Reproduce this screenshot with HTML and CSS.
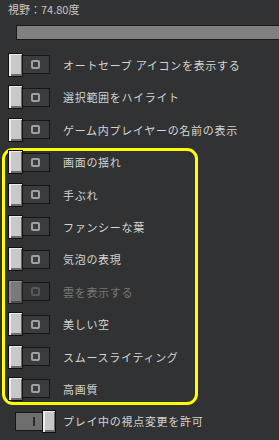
FILE: index.html
```html
<!DOCTYPE html>
<html lang="ja">
<head>
    <meta charset="UTF-8">
    <meta name="viewport" content="width=device-width, initial-scale=1.0">
    <title>ビデオ設定</title>
    <link rel="stylesheet" href="styles.css">
</head>
<body>
    <div class="title">視野：74.80度</div>
    <div class="slider"></div>

    <div class="list">
        <div class="row"><span class="toggle"><span class="knob"></span><span class="track"><i class="mark-o"></i></span></span><span class="label">オートセーブ アイコンを表示する</span></div>
        <div class="row"><span class="toggle"><span class="knob"></span><span class="track"><i class="mark-o"></i></span></span><span class="label">選択範囲をハイライト</span></div>
        <div class="row"><span class="toggle"><span class="knob"></span><span class="track"><i class="mark-o"></i></span></span><span class="label">ゲーム内プレイヤーの名前の表示</span></div>
        <div class="row"><span class="toggle"><span class="knob"></span><span class="track"><i class="mark-o"></i></span></span><span class="label">画面の揺れ</span></div>
        <div class="row"><span class="toggle"><span class="knob"></span><span class="track"><i class="mark-o"></i></span></span><span class="label">手ぶれ</span></div>
        <div class="row"><span class="toggle"><span class="knob"></span><span class="track"><i class="mark-o"></i></span></span><span class="label">ファンシーな葉</span></div>
        <div class="row"><span class="toggle"><span class="knob"></span><span class="track"><i class="mark-o"></i></span></span><span class="label">気泡の表現</span></div>
        <div class="row disabled"><span class="toggle"><span class="knob"></span><span class="track"><i class="mark-o"></i></span></span><span class="label">雲を表示する</span></div>
        <div class="row"><span class="toggle"><span class="knob"></span><span class="track"><i class="mark-o"></i></span></span><span class="label">美しい空</span></div>
        <div class="row"><span class="toggle"><span class="knob"></span><span class="track"><i class="mark-o"></i></span></span><span class="label">スムースライティング</span></div>
        <div class="row"><span class="toggle"><span class="knob"></span><span class="track"><i class="mark-o"></i></span></span><span class="label">高画質</span></div>
        <div class="row on"><span class="toggle"><span class="track"><i class="mark-i"></i></span><span class="knob"></span></span><span class="label">プレイ中の視点変更を許可</span></div>
    </div>

    <div class="highlight"></div>
</body>
</html>
```

FILE: styles.css
```css
* {
    margin: 0;
    padding: 0;
    box-sizing: border-box;
}

body {
    font-family: "Noto Sans CJK JP", "Noto Sans", sans-serif;
    background: #313233;
    color: #d4d4d4;
    width: 279px;
    height: 440px;
    overflow: hidden;
    padding-left: 8px;
    position: relative;
}

.title {
    height: 18px;
    line-height: 18px;
    font-size: 11px;
    color: #c8c8c8;
}

.slider {
    margin: 7px 0 0 8px;
    height: 15px;
    border: 1px solid #1a1a1b;
    border-right: none;
    background: #808080;
}

.list {
    margin-top: 8.8px;
}

.row {
    display: flex;
    align-items: center;
    height: 32.4px;
}

.toggle {
    display: flex;
    align-items: center;
    width: 42px;
    flex-shrink: 0;
}

.knob {
    width: 15px;
    height: 24px;
    border: 1px solid #111;
    background: #c8c8c8;
    box-shadow: inset 2px 1px 0 #ececec, inset -1px -2px 0 #6c6c6c;
    position: relative;
    z-index: 1;
}

.track {
    width: 28px;
    height: 19px;
    margin-left: -1px;
    border: 1px solid #161617;
    background: #3b3c3d;
    display: flex;
    align-items: center;
    padding-left: 8px;
}

.mark-o {
    width: 9px;
    height: 9px;
    border: 2px solid #a0a0a0;
    border-radius: 2px;
}

.label {
    margin-left: 13px;
    font-size: 11px;
    letter-spacing: 0.7px;
    white-space: nowrap;
}

.disabled .knob {
    background: #7a7a7a;
    box-shadow: inset 2px 1px 0 #8e8e8e, inset -1px -2px 0 #505050;
    border-color: #1c1c1c;
}

.disabled .track {
    background: #353637;
}

.disabled .mark-o {
    border-color: #585858;
}

.disabled .label {
    color: #787878;
}

.on .toggle {
    margin-left: 7px;
    width: 41px;
}

.on .track {
    margin-left: 0;
    margin-right: -1px;
    background: #6e6e6e;
    padding-left: 17px;
}

.on .knob {
    height: 23px;
    width: 14px;
}

.on .label {
    margin-left: 7px;
}

.mark-i {
    width: 2px;
    height: 9px;
    background: #2a2a2a;
}

.highlight {
    position: absolute;
    left: 2px;
    top: 148px;
    width: 196px;
    height: 257px;
    border: 3px solid #ffff00;
    border-radius: 11px;
    pointer-events: none;
}
```
